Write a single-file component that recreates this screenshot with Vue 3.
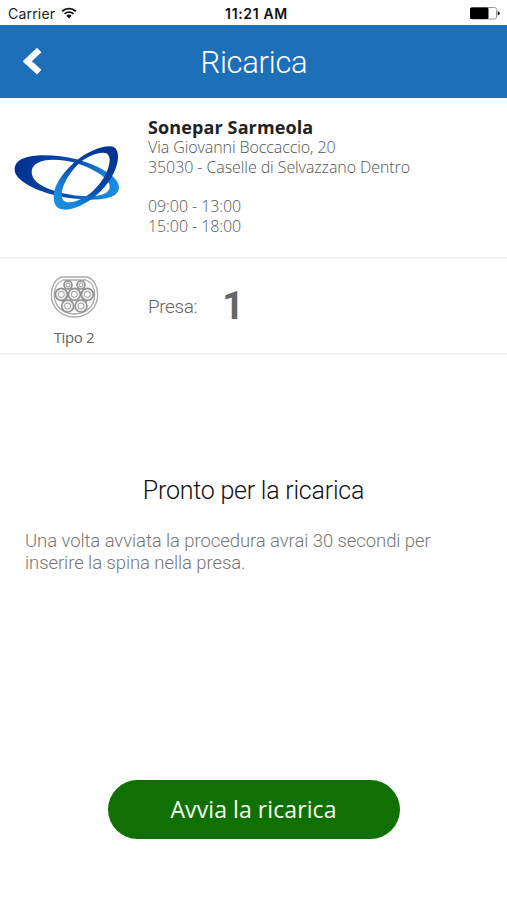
<template>
  <div class="screen">
    <div class="status-bar">
      <div class="status-left">
        <span class="carrier">Carrier</span>
        <svg class="wifi" viewBox="0 0 16 12" aria-hidden="true">
          <path d="M1.2 4.3a10 10 0 0 1 13.6 0" />
          <path d="M3.6 6.9a6.4 6.4 0 0 1 8.8 0" />
          <path class="dot" d="M5.4 8.8a3.8 3.8 0 0 1 5.2 0L8 11.6z" />
        </svg>
      </div>
      <span class="clock">11:21 AM</span>
      <svg class="battery" viewBox="0 0 30 13" aria-hidden="true">
        <rect x=".5" y=".5" width="26" height="11.5" rx="2" fill="#fff" stroke="#999" />
        <rect x="0" y=".5" width="18.5" height="11.5" rx="1.5" />
        <path d="M27.7 4.2q2 .6 2 2.1t-2 2.1z" />
      </svg>
    </div>

    <header class="nav">
      <button class="back" aria-label="Indietro">
        <svg viewBox="0 0 20 28"><path d="M16.2 3 4.3 14.3l11.9 10.9" /></svg>
      </button>
      <h1>Ricarica</h1>
    </header>

    <section class="station">
      <svg class="logo" viewBox="42 46 318 198" aria-hidden="true">
        <defs>
          <linearGradient id="ringWide" x1="44" y1="110" x2="357" y2="180" gradientUnits="userSpaceOnUse">
            <stop offset="0" stop-color="#00308f" />
            <stop offset=".55" stop-color="#0a4fb0" />
            <stop offset=".85" stop-color="#1685d8" />
            <stop offset="1" stop-color="#1a8fe2" />
          </linearGradient>
          <linearGradient id="ringTall" x1="340" y1="55" x2="170" y2="235" gradientUnits="userSpaceOnUse">
            <stop offset="0" stop-color="#00308f" />
            <stop offset=".5" stop-color="#0a49a8" />
            <stop offset=".8" stop-color="#1685d8" />
            <stop offset="1" stop-color="#1a8fe2" />
          </linearGradient>
        </defs>
        <path
          fill="url(#ringWide)"
          fill-rule="evenodd"
          d="M44 120C44 88 84 77 130 77C200 77 265 95 310 121C340 138 357 155 357 173C357 199 325 210 275 210C205 210 120 190 78 162C56 148 44 134 44 120ZM95 126C95 103 122 90 158 90C211 90 262 108 296 131C318 146 329 158 329 171C329 191 303 200 267 200C212 200 151 185 118 163C102 152 95 139 95 126Z"
        />
        <path
          fill="url(#ringTall)"
          fill-rule="evenodd"
          d="M330 50C347 50 355 64 354 84C352 122 325 167 287 198C258 223 220 240 194 240C172 240 161 226 161 203C161 169 183 136 217 104C251 71 297 50 330 50ZM308 69C323 68 330 78 329 94C326 128 301 166 271 191C248 209 224 218 207 218C192 218 185 210 185 196C185 169 204 136 230 108C255 82 285 70 308 69Z"
        />
      </svg>
      <div class="details">
        <h2>Sonepar Sarmeola</h2>
        <p class="street">Via Giovanni Boccaccio, 20</p>
        <p class="city">35030 - Caselle di Selvazzano Dentro</p>
        <p v-for="(slot, i) in hours" :key="slot" class="hours" :class="{ first: i === 0 }">{{ slot }}</p>
      </div>
    </section>

    <section class="socket">
      <div class="plug">
        <svg viewBox="0 0 145 126" aria-hidden="true">
          <path class="shell" d="M34 3H111C132 10 142 33 142 56C142 95 111 123 72.5 123S3 95 3 56C3 33 13 10 34 3Z" />
          <path class="shell" d="M38 12H107C125 19 133 37 133 57C133 91 106 114 72.5 114S12 91 12 57C12 37 20 19 38 12Z" />
          <path class="web" d="M45 38Q49 56 36 78M63 38Q60 50 74 72M83 38Q85 50 72 72M101 38Q97 56 109 78M46 73L63 38M99 73L83 38" />
          <g v-for="pin in pins" :key="pin.x + '-' + pin.y">
            <circle class="pin" :cx="pin.x" :cy="pin.y" :r="pin.r" />
            <circle class="core" :cx="pin.x" :cy="pin.y" :r="pin.r * 0.5" />
          </g>
        </svg>
        <span>Tipo 2</span>
      </div>
      <span class="socket-label">Presa:</span>
      <strong>1</strong>
    </section>

    <main class="ready">
      <h3>Pronto per la ricarica</h3>
      <p>Una volta avviata la procedura avrai 30 secondi per<br />inserire la spina nella presa.</p>
      <button class="start">Avvia la ricarica</button>
    </main>
  </div>
</template>

<script setup>
const hours = ['09:00 - 13:00', '15:00 - 18:00']

// two signal pins on top, five power pins below
const pins = [
  { x: 53, y: 27, r: 12 },
  { x: 92, y: 27, r: 12 },
  { x: 33, y: 55, r: 18 },
  { x: 72, y: 55, r: 18 },
  { x: 111, y: 55, r: 18 },
  { x: 52, y: 90, r: 18 },
  { x: 92, y: 90, r: 18 }
]
</script>

<style>
body {
  margin: 0;
  background: #fff;
}
</style>

<style scoped>
.screen {
  width: 507px;
  height: 900px;
  display: flex;
  flex-direction: column;
  background: #fefefe;
  font-family: "Open Sans", "Noto Sans", sans-serif;
  overflow: hidden;
}

h1,
h2,
h3,
p {
  margin: 0;
}

button {
  border: 0;
  padding: 0;
  font-family: inherit;
}

.status-bar {
  height: 25px;
  box-sizing: border-box;
  padding: 1px 7px 0 8px;
  display: grid;
  grid-template-columns: 1fr auto 1fr;
  align-items: center;
  font-family: Inter, sans-serif;
  color: #222;
}

.status-left {
  display: flex;
  align-items: center;
  gap: 6px;
}

.carrier {
  font-size: 14px;
  letter-spacing: 0.2px;
}

.wifi {
  width: 16px;
  height: 12px;
  fill: none;
  stroke: #111;
  stroke-width: 1.9;
}

.wifi .dot {
  fill: #111;
  stroke: none;
}

.clock {
  padding-left: 5px;
  font-size: 14px;
  font-weight: 600;
  letter-spacing: 0.65px;
  color: #111;
}

.battery {
  width: 30px;
  height: 13px;
  justify-self: end;
}

.nav {
  height: 73px;
  display: grid;
  grid-template-columns: 60px 1fr 60px;
  align-items: center;
  background: #1d6fb8;
  color: #fff;
}

.back {
  width: 20px;
  height: 28px;
  margin: 0 0 2px 23px;
  background: none;
}

.back svg {
  display: block;
  width: 20px;
  height: 28px;
  fill: none;
  stroke: #fff;
  stroke-width: 6.4;
}

.nav h1 {
  padding: 2px 0 0 1px;
  font: 300 31px/40px Roboto, sans-serif;
  text-align: center;
  letter-spacing: -0.3px;
}

.station {
  height: 159px;
  display: flex;
  border-bottom: 2px solid #f3f3f3;
}

.logo {
  width: 106px;
  height: 66px;
  margin: 47px 28px 0 14px;
  flex: none;
}

.details {
  padding-top: 19px;
  font-size: 16px;
  line-height: 20px;
  font-weight: 300;
  letter-spacing: -0.08px;
  color: #555;
  white-space: nowrap;
}

.details h2 {
  font-size: 18px;
  line-height: 20px;
  font-weight: 700;
  letter-spacing: 0.12px;
  color: #222;
}

.hours {
  line-height: 19.5px;
}

.hours.first {
  margin-top: 20px;
}

.socket {
  height: 94px;
  display: flex;
  align-items: center;
  border-bottom: 2px solid #f3f3f3;
  color: #666;
}

.plug {
  width: 148px;
  padding-top: 10px;
  display: flex;
  flex-direction: column;
  align-items: center;
  font-size: 15px;
  line-height: 20px;
  letter-spacing: -0.35px;
}

.plug svg {
  width: 49px;
  height: 42px;
  margin-bottom: 9px;
}

.shell {
  fill: none;
  stroke: #aaa;
  stroke-width: 4;
}

.web {
  fill: none;
  stroke: #999;
  stroke-width: 4;
}

.pin {
  fill: #eee;
  stroke: #929292;
  stroke-width: 5;
}

.core {
  fill: #fff;
  stroke: #999;
  stroke-width: 3;
}

.socket-label {
  padding-top: 1px;
  font: 300 19px/24px Roboto, sans-serif;
  letter-spacing: -0.4px;
}

.socket strong {
  margin-left: 25px;
  font: 700 38px/40px Roboto, sans-serif;
}

.ready {
  flex: 1;
  display: flex;
  flex-direction: column;
  align-items: center;
  padding-top: 120px;
  font-family: Roboto, sans-serif;
  font-weight: 300;
}

.ready h3 {
  padding-top: 1px;
  font-size: 25px;
  line-height: 30px;
  font-weight: 300;
  letter-spacing: -0.23px;
  color: #111;
}

.ready p {
  align-self: flex-start;
  margin: 24px 0 0 25px;
  font-size: 18.5px;
  line-height: 22px;
  letter-spacing: -0.08px;
  color: #777;
  white-space: nowrap;
}

.start {
  width: 292px;
  height: 59px;
  margin-top: 206px;
  border-radius: 30px;
  background: #107002;
  color: #f4fff2;
  font: 400 23px/59px "Open Sans", "Noto Sans", sans-serif;
  letter-spacing: 0.08px;
}
</style>
